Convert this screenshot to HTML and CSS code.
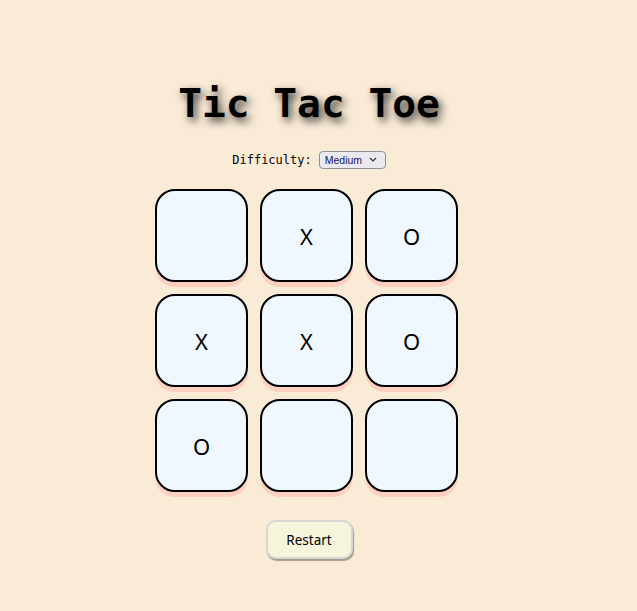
FILE: index.html
```html
<!DOCTYPE html>
<html>
<head>
<meta charset="utf-8">
<link rel="stylesheet" href="styles.css">
</head>
<body>
<div class="app">
  <h1 class="title">Tic Tac Toe</h1>
  <div class="difficulty">
    <label class="label" for="diff">Difficulty:</label>
    <select id="diff" class="select">
      <option>Easy</option>
      <option selected>Medium</option>
      <option>Hard</option>
    </select>
  </div>
  <div class="board">
    <button class="cell"></button>
    <button class="cell">X</button>
    <button class="cell">O</button>
    <button class="cell">X</button>
    <button class="cell">X</button>
    <button class="cell">O</button>
    <button class="cell">O</button>
    <button class="cell"></button>
    <button class="cell"></button>
  </div>
  <button class="restart">Restart</button>
</div>
</body>
</html>
```
FILE: styles.css
```css
html, body {
  margin: 0;
  padding: 0;
  background: #faebd7;
}
body {
  height: 611px;
}
.app {
  width: 618px;
  display: flex;
  flex-direction: column;
  align-items: center;
  padding-top: 80px;
}
.title {
  margin: 0;
  font-family: "DejaVu Sans Mono", monospace;
  font-weight: bold;
  font-size: 39.5px;
  line-height: 47px;
  color: #000;
  text-shadow: 3px 4px 9px rgba(0, 0, 0, 0.8);
}
.difficulty {
  margin-top: 23px;
  display: flex;
  align-items: center;
  gap: 7px;
  height: 19px;
}
.label {
  font-family: "DejaVu Sans Mono", monospace;
  font-size: 12px;
  color: #000;
}
.select {
  -webkit-appearance: none;
  appearance: none;
  box-sizing: border-box;
  font-family: "Liberation Sans", Arial, sans-serif;
  font-size: 10.5px;
  line-height: 16px;
  width: 67px;
  height: 18px;
  padding: 0 0 0 5px;
  color: #14145a;
  background-color: #e9e9ef;
  background-image: url("data:image/svg+xml,%3Csvg xmlns='http://www.w3.org/2000/svg' width='8' height='5' viewBox='0 0 8 5'%3E%3Cpath d='M1 1l3 3 3-3' fill='none' stroke='%23333' stroke-width='1.2'/%3E%3C/svg%3E");
  background-repeat: no-repeat;
  background-position: right 8px center;
  border: 1px solid #8f8f9d;
  border-radius: 4px;
}
.board {
  margin-top: 20px;
  margin-right: 5px;
  display: grid;
  grid-template-columns: repeat(3, 93px);
  grid-auto-rows: 93px;
  gap: 12px;
}
.cell {
  box-sizing: border-box;
  width: 93px;
  height: 93px;
  background: #f0f8ff;
  border: 2px solid #000;
  border-radius: 20px;
  box-shadow: 0 5px 0 #fdcfc0;
  font-family: "Noto Sans", "Open Sans", sans-serif;
  font-size: 22px;
  color: #000;
  padding: 0;
}
.restart {
  margin-top: 28px;
  box-sizing: border-box;
  width: 87px;
  height: 39px;
  background: #f5f5dc;
  border: 2px solid #d6d6d2;
  border-radius: 10px;
  box-shadow: 1px 2px 1px rgba(0, 0, 0, 0.35);
  font-family: "Noto Sans", "Open Sans", sans-serif;
  font-size: 13.5px;
  color: #000;
}
```
